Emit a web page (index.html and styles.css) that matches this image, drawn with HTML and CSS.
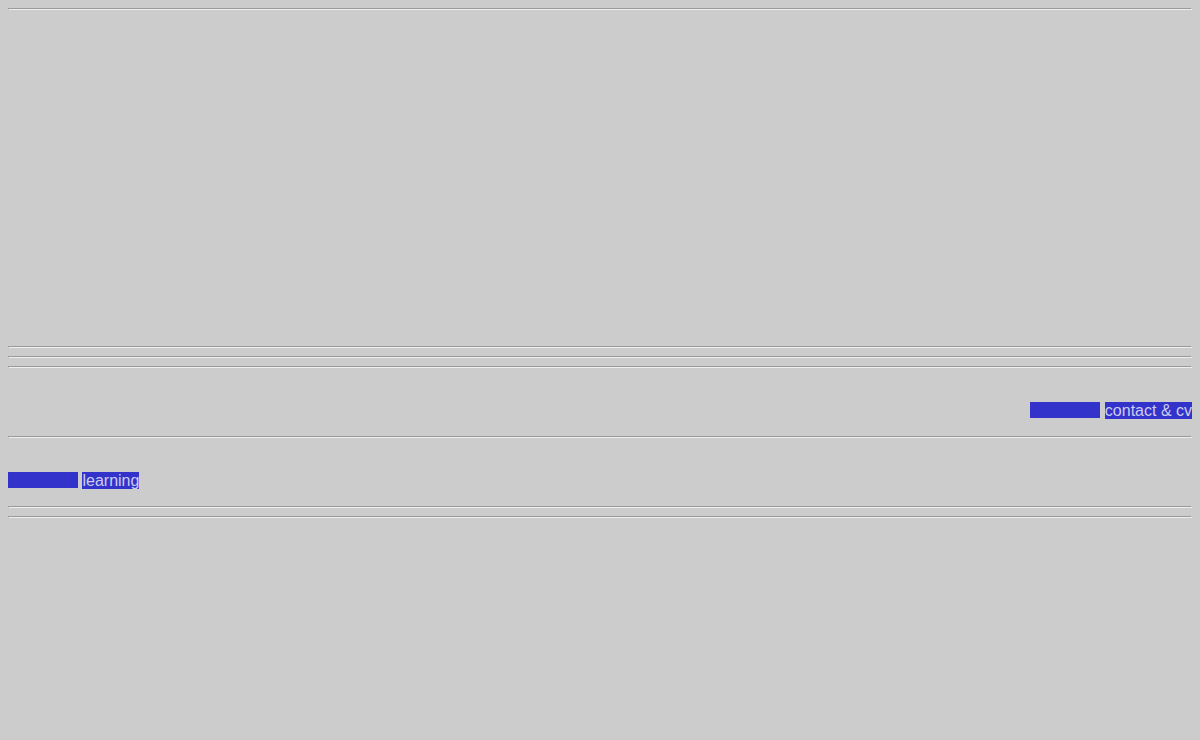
FILE: index.html
```html
<!DOCTYPE html>
<html lang="en">
<head>
  <meta charset="UTF-8" />
  <title>home</title>
  <link rel="stylesheet" href="styles.css">
</head>
<body>
  <hr>
  <div class="banner"></div>
  <hr>
  <hr>
  <hr>

  <p class="right">
    <br>
    <span class="pad"></span> <a class="tab" href="#">contact &amp; cv</a>
  </p>

  <hr>

  <p>
    <br>
    <span class="pad"></span> <a class="tab" href="#">learning</a>
  </p>

  <hr>
  <hr>
</body>
</html>
```

FILE: styles.css
```css
body {
  margin: 0 8px 8px;
  background: #cccccc;
  color: #000;
  font-family: "Liberation Sans", Arial, sans-serif;
  font-size: 16px;
}

.banner {
  height: 320px;
}

.right {
  text-align: right;
}

.pad {
  display: inline-block;
  width: 70px;
  height: 16px;
  background: #3333cc;
  vertical-align: -2px;
}

.tab {
  background: #3333cc;
  color: #ccccee;
  text-decoration: none;
}
```
